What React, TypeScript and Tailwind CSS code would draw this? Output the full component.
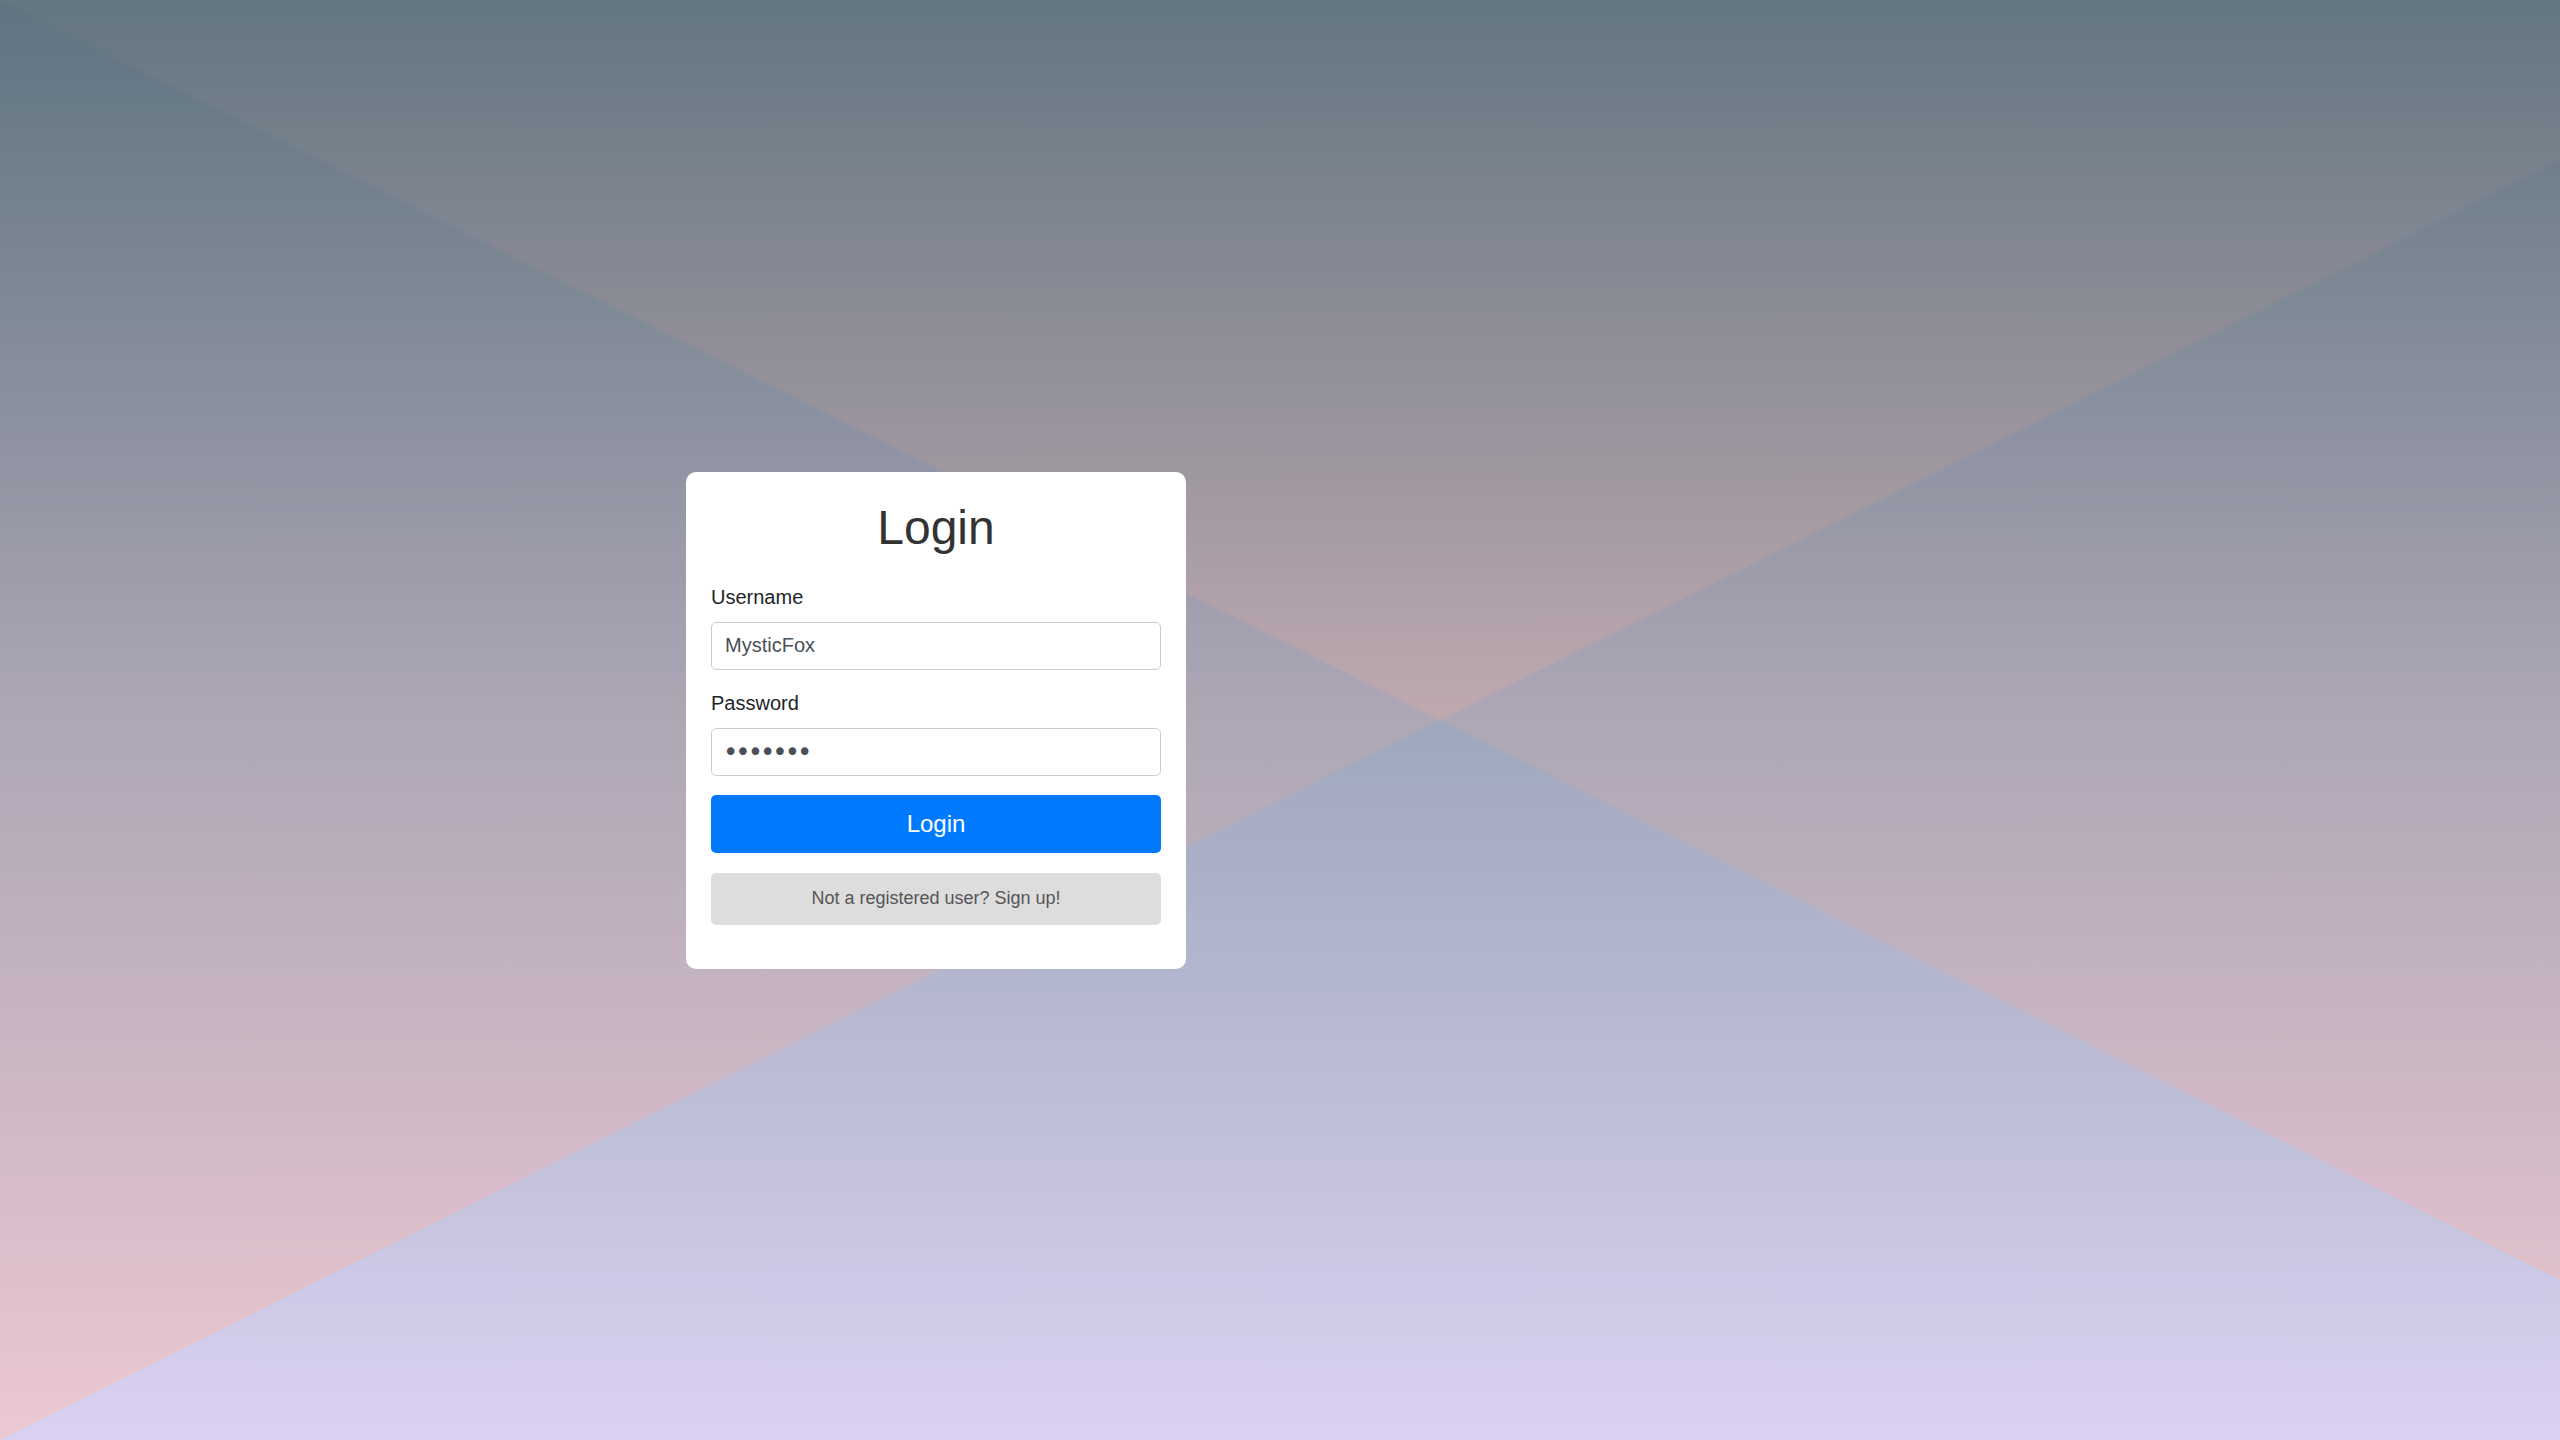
function LoginCard() {
  return (
    <form className="w-[500px] bg-white rounded-[10px] px-[25px] pt-[28px] pb-[44px] flex flex-col">
      <h1 className="text-center text-[48px] leading-[56px] text-[#333333]">Login</h1>
      <label className="mt-[29px] text-[20px] leading-[24px] text-[#212529]">Username</label>
      <input
        className="mt-[13px] h-[48px] w-full border border-[#cccccc] rounded-[5px] px-[13px] text-[20px] text-[#495057] outline-none"
        defaultValue="MysticFox"
      />
      <label className="mt-[21px] text-[20px] leading-[24px] text-[#212529]">Password</label>
      <input
        type="password"
        className="mt-[13px] h-[48px] w-full border border-[#cccccc] rounded-[5px] px-[11px] text-[26px] tracking-[-3px] font-['DejaVu_Sans',sans-serif] text-[#495057] outline-none"
        defaultValue="1234567"
      />
      <button type="button" className="mt-[19px] h-[58px] w-full rounded-[5px] bg-[#007bff] text-white text-[24px]">
        Login
      </button>
      <button type="button" className="mt-[20px] h-[52px] w-full rounded-[5px] bg-[#dddddd] text-[#555555] text-[18px]">
        Not a registered user? Sign up!
      </button>
    </form>
  );
}

export default function App() {
  return (
    <div className="relative w-full h-screen overflow-hidden font-['Liberation_Sans',Arial,sans-serif] bg-[linear-gradient(to_bottom,#5e7380,#aea7b6_50%,#ecc8d3)]">
      <div className="absolute inset-0 bg-[linear-gradient(to_bottom,#637681,#bfa9b1_50%)] [clip-path:polygon(0_0,100%_0,100%_11.11%,56.25%_50%)]" />
      <div className="absolute inset-0 bg-[linear-gradient(to_bottom,#9ea7bd_50%,#dbd2f1)] [clip-path:polygon(0_100%,56.25%_50%,100%_88.89%,100%_100%)]" />
      <div className="relative h-full flex items-center pl-[686px]">
        <LoginCard />
      </div>
    </div>
  );
}
